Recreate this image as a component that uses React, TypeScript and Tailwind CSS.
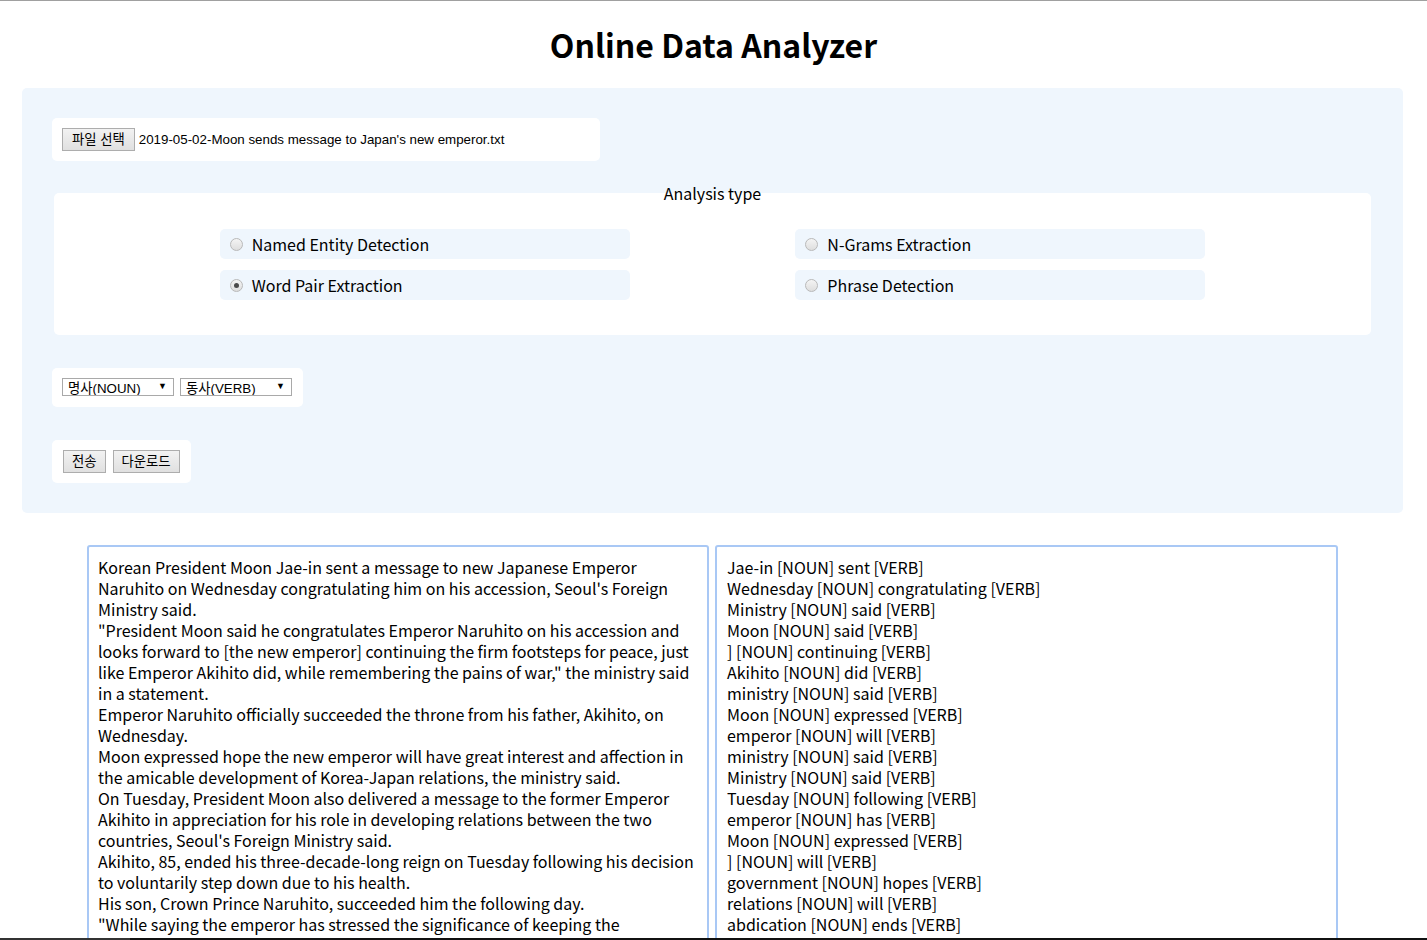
import type { FC } from "react";

const sourceLines = [
	"Korean President Moon Jae-in sent a message to new Japanese Emperor",
	"Naruhito on Wednesday congratulating him on his accession, Seoul's Foreign",
	"Ministry said.",
	"\"President Moon said he congratulates Emperor Naruhito on his accession and",
	"looks forward to [the new emperor] continuing the firm footsteps for peace, just",
	"like Emperor Akihito did, while remembering the pains of war,\" the ministry said",
	"in a statement.",
	"Emperor Naruhito officially succeeded the throne from his father, Akihito, on",
	"Wednesday.",
	"Moon expressed hope the new emperor will have great interest and affection in",
	"the amicable development of Korea-Japan relations, the ministry said.",
	"On Tuesday, President Moon also delivered a message to the former Emperor",
	"Akihito in appreciation for his role in developing relations between the two",
	"countries, Seoul's Foreign Ministry said.",
	"Akihito, 85, ended his three-decade-long reign on Tuesday following his decision",
	"to voluntarily step down due to his health.",
	"His son, Crown Prince Naruhito, succeeded him the following day.",
	"\"While saying the emperor has stressed the significance of keeping the",
	"peace constitution, the government hopes that relations will develop,\" he said.",
	"The abdication ends the Heisei era.",
];

const resultLines = [
	"Jae-in [NOUN] sent [VERB]",
	"Wednesday [NOUN] congratulating [VERB]",
	"Ministry [NOUN] said [VERB]",
	"Moon [NOUN] said [VERB]",
	"] [NOUN] continuing [VERB]",
	"Akihito [NOUN] did [VERB]",
	"ministry [NOUN] said [VERB]",
	"Moon [NOUN] expressed [VERB]",
	"emperor [NOUN] will [VERB]",
	"ministry [NOUN] said [VERB]",
	"Ministry [NOUN] said [VERB]",
	"Tuesday [NOUN] following [VERB]",
	"emperor [NOUN] has [VERB]",
	"Moon [NOUN] expressed [VERB]",
	"] [NOUN] will [VERB]",
	"government [NOUN] hopes [VERB]",
	"relations [NOUN] will [VERB]",
	"abdication [NOUN] ends [VERB]",
	"era [NOUN] ends [VERB]",
];

const analysisTypes = [
	{ label: "Named Entity Detection", checked: false },
	{ label: "N-Grams Extraction", checked: false },
	{ label: "Word Pair Extraction", checked: true },
	{ label: "Phrase Detection", checked: false },
];

const sysFont = "font-['Liberation_Sans','Noto_Sans_CJK_KR',sans-serif]";

const LegacyButton: FC<{ label: string; tight?: boolean }> = ({ label, tight }) => (
	<button
		type="button"
		className={`h-[23px] border border-[#adadad] bg-gradient-to-b from-[#f2f2f2] to-[#e0e0e0] ${tight ? "px-[8px]" : "px-[9px]"} text-[13.333px] leading-none text-black ${sysFont}`}
	>
		{label}
	</button>
);

const LegacySelect: FC<{ value: string }> = ({ value }) => (
	<div
		className={`flex h-[18px] w-[112px] items-start justify-between overflow-hidden border border-[#a9a9a9] bg-white pl-[5px] pr-[6px] text-[13.333px] leading-[20px] text-black ${sysFont}`}
	>
		<span>{value}</span>
		<span className="text-[9px] leading-[14px]">▼</span>
	</div>
);

const Radio: FC<{ checked: boolean }> = ({ checked }) => (
	<span className="flex size-[13px] shrink-0 items-center justify-center rounded-full border border-[#b9b9b9] bg-gradient-to-b from-[#f4f4f4] to-[#dedede]">
		{checked && <span className="size-[5px] rounded-full bg-[#4a4a4a]" />}
	</span>
);

export default function App() {
	return (
		<div className="min-h-screen border-t border-[#a0a0a0] bg-white font-['Noto_Sans_CJK_KR','Noto_Sans',sans-serif] text-black">
			<h1 className="pt-[21px] pb-[22px] text-center text-[32px] font-bold leading-[44px]">
				Online Data Analyzer
			</h1>

			<section className="ml-[22px] w-[1381px] rounded-[5px] bg-[#eff6fd] px-[30px] py-[30px]">
				<div className="flex w-[548px] items-center gap-[4px] rounded-[5px] bg-white p-[10px]">
					<LegacyButton label="파일 선택" />
					<span className={`text-[13.333px] text-black ${sysFont}`}>
						2019-05-02-Moon sends message to Japan's new emperor.txt
					</span>
				</div>

				<fieldset className="mx-[2px] mt-[21px] rounded-[5px] bg-white pb-[35px]">
					<legend className="mx-auto px-1 text-[16px] leading-[22px]">
						Analysis type
					</legend>
					<div className="mt-[25px] grid grid-cols-[410px_410px] justify-evenly gap-y-[11px]">
						{analysisTypes.map((t) => (
							<label
								key={t.label}
								className="flex h-[30px] items-center gap-[9px] rounded-[5px] bg-[#eff6fd] pl-[10px] text-[16px]"
							>
								<Radio checked={t.checked} />
								<span>{t.label}</span>
							</label>
						))}
					</div>
				</fieldset>

				<div className="mt-[33px] flex w-[251px] gap-[6px] rounded-[5px] bg-white px-[10px] pt-[10px] pb-[11px]">
					<LegacySelect value="명사(NOUN)" />
					<LegacySelect value="동사(VERB)" />
				</div>

				<div className="mt-[33px] flex w-[139px] gap-[7px] rounded-[5px] bg-white py-[10px] pl-[11px]">
					<LegacyButton label="전송" tight />
					<LegacyButton label="다운로드" tight />
				</div>
			</section>

			<div className="ml-[87px] mt-[32px] flex gap-[6px]">
				<div className="h-[420px] w-[622px] overflow-hidden rounded-[3px] border-2 border-[#a9c8f5] pl-[9px] pt-[10px] text-[16px] leading-[21px]">
					{sourceLines.map((l, i) => (
						<div key={i} className="whitespace-nowrap">
							{l}
						</div>
					))}
				</div>
				<div className="h-[420px] w-[623px] overflow-hidden rounded-[3px] border-2 border-[#a9c8f5] pl-[10px] pt-[10px] text-[16px] leading-[21px]">
					{resultLines.map((l, i) => (
						<div key={i} className="whitespace-nowrap">
							{l}
						</div>
					))}
				</div>
			</div>

			<div className="fixed inset-x-0 bottom-0 flex h-[2px]">
				<div className="w-[130px] bg-[#333333]" />
				<div className="flex-1 bg-[#111111]" />
			</div>
		</div>
	);
}
